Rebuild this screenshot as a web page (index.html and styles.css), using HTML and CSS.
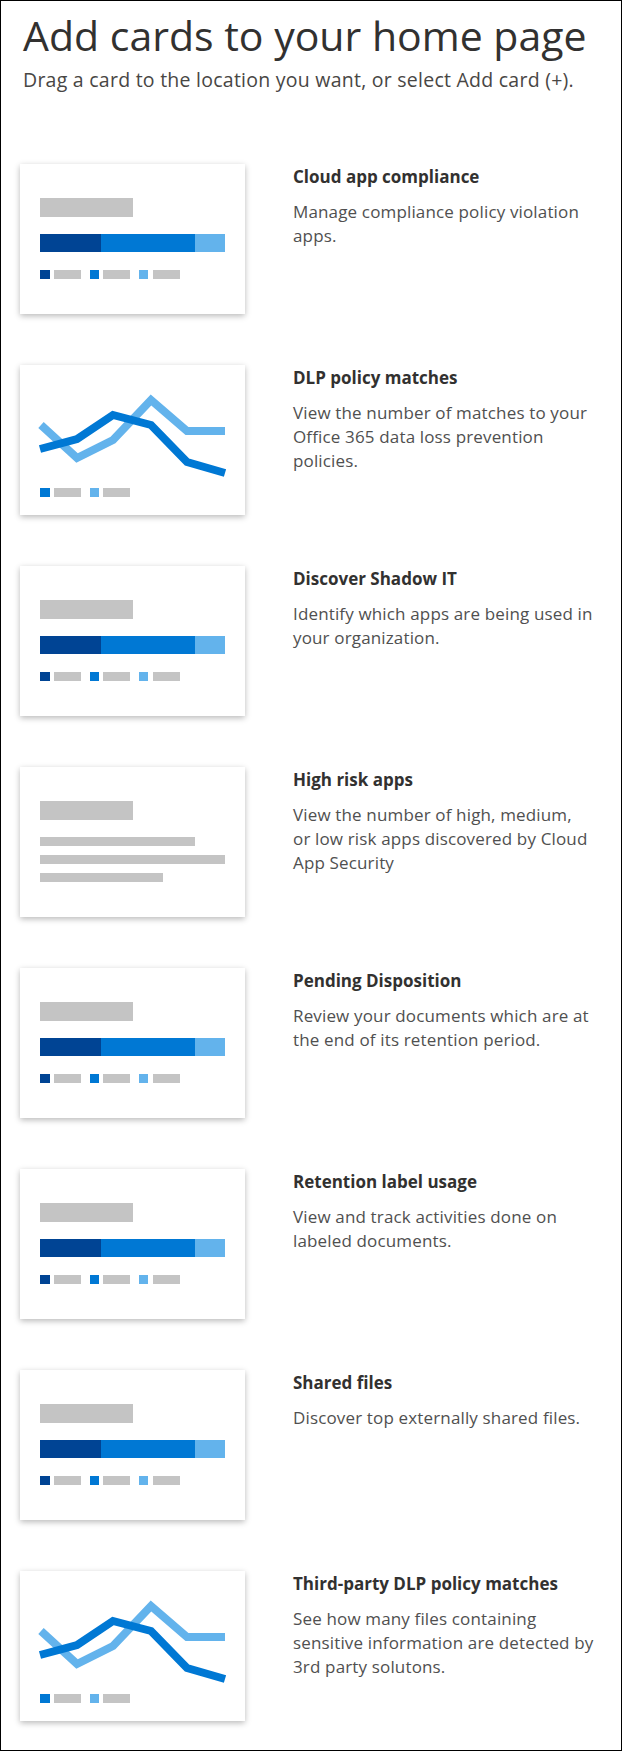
FILE: index.html
```html
<!DOCTYPE html>
<html lang="en">
<head>
    <meta charset="UTF-8">
    <title>Add cards to your home page</title>
    <link rel="stylesheet" href="styles.css">
</head>
<body>
    <!-- Shared card previews -->
    <svg class="defs" width="0" height="0">
        <symbol id="preview-bar" viewBox="0 0 225 150">
            <rect x="20" y="34" width="93" height="19" fill="#c4c4c4"/>
            <rect x="20" y="70" width="61" height="18" fill="#004494"/>
            <rect x="81" y="70" width="94" height="18" fill="#0078d4"/>
            <rect x="175" y="70" width="30" height="18" fill="#63b3ec"/>
            <rect x="20" y="106" width="10" height="9" fill="#004494"/>
            <rect x="34" y="106" width="27" height="9" fill="#c4c4c4"/>
            <rect x="70" y="106" width="9" height="9" fill="#0078d4"/>
            <rect x="83" y="106" width="27" height="9" fill="#c4c4c4"/>
            <rect x="119" y="106" width="9" height="9" fill="#63b3ec"/>
            <rect x="133" y="106" width="27" height="9" fill="#c4c4c4"/>
        </symbol>
        <symbol id="preview-line" viewBox="0 0 225 150">
            <polyline points="21,60 57,93 93,75 131,35 167,66 205,66" fill="none" stroke="#63b3ec" stroke-width="8"/>
            <polyline points="20,84 57,74 93,50 131,60 167,97 205,108" fill="none" stroke="#0078d4" stroke-width="8"/>
            <rect x="20" y="123" width="10" height="9" fill="#0078d4"/>
            <rect x="34" y="123" width="27" height="9" fill="#c4c4c4"/>
            <rect x="70" y="123" width="9" height="9" fill="#63b3ec"/>
            <rect x="83" y="123" width="27" height="9" fill="#c4c4c4"/>
        </symbol>
        <symbol id="preview-list" viewBox="0 0 225 150">
            <rect x="20" y="34" width="93" height="19" fill="#c4c4c4"/>
            <rect x="20" y="70" width="155" height="9" fill="#c4c4c4"/>
            <rect x="20" y="88" width="185" height="9" fill="#c4c4c4"/>
            <rect x="20" y="106" width="123" height="9" fill="#c4c4c4"/>
        </symbol>
    </svg>

    <div class="page">
        <h1>Add cards to your home page</h1>
        <p class="subtitle">Drag a card to the location you want, or select Add card (+).</p>

        <div class="cards">
            <div class="card-row">
                <svg class="preview"><use href="#preview-bar"/></svg>
                <div class="card-text">
                    <h2>Cloud app compliance</h2>
                    <p>Manage compliance policy violation<br>apps.</p>
                </div>
            </div>

            <div class="card-row">
                <svg class="preview"><use href="#preview-line"/></svg>
                <div class="card-text">
                    <h2>DLP policy matches</h2>
                    <p>View the number of matches to your<br>Office 365 data loss prevention<br>policies.</p>
                </div>
            </div>

            <div class="card-row">
                <svg class="preview"><use href="#preview-bar"/></svg>
                <div class="card-text">
                    <h2>Discover Shadow IT</h2>
                    <p>Identify which apps are being used in<br>your organization.</p>
                </div>
            </div>

            <div class="card-row">
                <svg class="preview"><use href="#preview-list"/></svg>
                <div class="card-text">
                    <h2>High risk apps</h2>
                    <p>View the number of high, medium,<br>or low risk apps discovered by Cloud<br>App Security</p>
                </div>
            </div>

            <div class="card-row">
                <svg class="preview"><use href="#preview-bar"/></svg>
                <div class="card-text">
                    <h2>Pending Disposition</h2>
                    <p>Review your documents which are at<br>the end of its retention period.</p>
                </div>
            </div>

            <div class="card-row">
                <svg class="preview"><use href="#preview-bar"/></svg>
                <div class="card-text">
                    <h2>Retention label usage</h2>
                    <p>View and track activities done on<br>labeled documents.</p>
                </div>
            </div>

            <div class="card-row">
                <svg class="preview"><use href="#preview-bar"/></svg>
                <div class="card-text">
                    <h2>Shared files</h2>
                    <p>Discover top externally shared files.</p>
                </div>
            </div>

            <div class="card-row">
                <svg class="preview"><use href="#preview-line"/></svg>
                <div class="card-text">
                    <h2>Third-party DLP policy matches</h2>
                    <p>See how many files containing<br>sensitive information are detected by<br>3rd party solutons.</p>
                </div>
            </div>
        </div>
    </div>
</body>
</html>
```

FILE: styles.css
```css
body {
    margin: 0;
    font-family: 'Open Sans', 'Noto Sans', sans-serif;
    background-color: #ffffff;
    color: #323130;
}

.defs {
    position: absolute;
    width: 0;
    height: 0;
}

.page {
    height: 1751px;
    box-sizing: border-box;
    border: 1px solid #000000;
    padding: 10px 0 0 19px;
}

h1 {
    margin: 0 0 0 3px;
    font-size: 41px;
    line-height: 48px;
    font-weight: 500;
    color: #323130;
}

.subtitle {
    margin: 9px 0 0 3px;
    font-size: 19.5px;
    line-height: 24px;
    letter-spacing: 0.25px;
    color: #484644;
}

.cards {
    margin-top: 72px;
    display: flex;
    flex-direction: column;
    gap: 51px;
}

.card-row {
    display: flex;
    align-items: flex-start;
    gap: 48px;
}

.preview {
    width: 225px;
    height: 150px;
    flex-shrink: 0;
    background-color: #ffffff;
    box-shadow: 0 2px 6px rgba(0, 0, 0, 0.28);
}

.card-text {
    width: 320px;
    padding-top: 2px;
    white-space: nowrap;
}

.card-text h2 {
    margin: 0;
    font-size: 17px;
    line-height: 22px;
    font-weight: 700;
    color: #323130;
}

.card-text p {
    margin: 12px 0 0;
    font-size: 17px;
    line-height: 24px;
    letter-spacing: 0.15px;
    color: #505050;
}
```
